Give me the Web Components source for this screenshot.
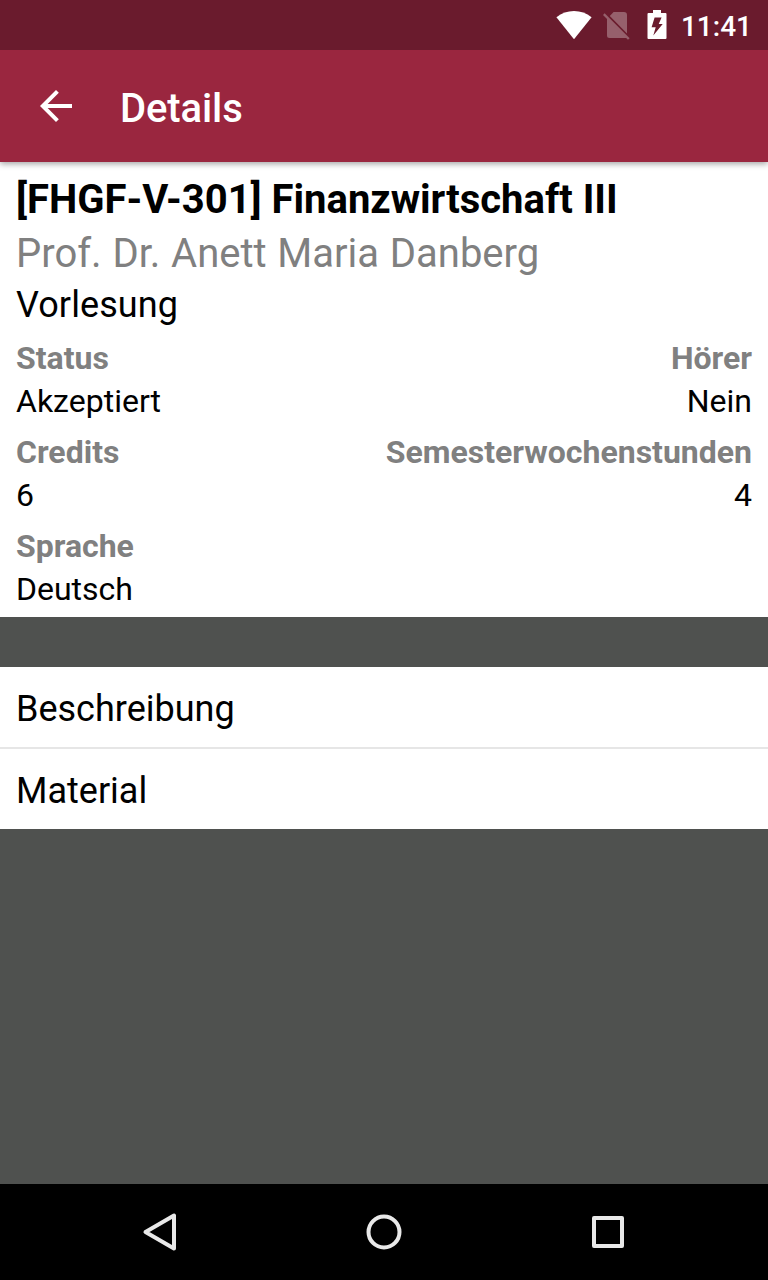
<!DOCTYPE html>
<html lang="de">
<head>
<meta charset="utf-8">
<meta name="viewport" content="width=device-width, initial-scale=1">
<title>Details</title>
<style>
  html, body { margin: 0; height: 100%; }
  body { font-family: Roboto, "Liberation Sans", sans-serif; color: #000; overflow: hidden; }
</style>
</head>
<body>
<course-screen></course-screen>

<script>
/** Base class: renders the static template of the subclass into an open root. */
class BaseElement extends HTMLElement {
  constructor() {
    super();
    const tpl = document.createElement('template');
    tpl.innerHTML = this.constructor.markup;
    this.attachShadow({ mode: 'open' }).append(tpl.content.cloneNode(true));
  }
}

class StatusBar extends BaseElement {
  static markup = `
    <style>
      :host { display: flex; align-items: center; justify-content: flex-end; height: 50px; flex: none;
        box-sizing: border-box; padding-right: 16px; background: #6a1b2d; color: #fff; z-index: 2; }
      svg { display: block; flex: none; }
      .sim { margin-left: 11px; }
      .battery { margin-left: 17px; }
      .time { margin-left: 14px; font: 500 28px/46px Roboto, sans-serif; padding-top: 4px; }
    </style>
    <svg width="36" height="30" viewBox="0 0 36 30" fill="#fff">
      <path d="M.4 7.2C5.600 3.200 11.500 1 18 1s12.400 2.200 17.600 6.200L18 29.300z"/>
    </svg>
    <svg class="sim" width="27" height="30" viewBox="0 0 27 30">
      <path fill="#96606c" d="M10.600 2H21q3 0 3 3v18.500L6.800 6zM4 7.500 24 27.400Q23.500 28 22 28H6.500Q4 28 4 25.500z"/>
      <path stroke="#96606c" stroke-width="2.400" d="M.8 4.200 25.800 29"/>
    </svg>
    <svg class="battery" width="20" height="30" viewBox="0 0 20 30">
      <path fill="#fff" d="M6 0h8v3h4.500q1 0 1 1v24q0 1-1 1h-17q-1 0-1-1V4q0-1 1-1H6z"/>
      <path fill="#6a1b2d" d="M7.600 7.600h7L11.700 14h4L6.300 25.500 8.700 17.200H4.600z"/>
    </svg>
    <span class="time"><slot></slot></span>
  `;
}

class AppBar extends BaseElement {
  static markup = `
    <style>
      :host { display: flex; align-items: center; height: 112px; flex: none; box-sizing: border-box;
        padding-left: 32px; background: #9a263f; color: #fff; z-index: 1;
        box-shadow: 0 2px 6px rgba(0, 0, 0, .36); }
      svg { display: block; flex: none; }
      h1 { margin: 6px 0 0 40px; font-size: 40px; line-height: 48px; font-weight: 500; letter-spacing: -.1px; }
    </style>
    <svg width="48" height="48" viewBox="0 0 24 24" fill="#fff">
      <path d="M20 11H7.830l5.590-5.590L12 4l-8 8 8 8 1.410-1.410L7.830 13H20z"/>
    </svg>
    <h1><slot></slot></h1>
  `;
}

class CourseHeader extends BaseElement {
  static markup = `
    <style>
      :host { display: block; height: 455px; box-sizing: border-box; padding: 11px 16px 0; background: #fff; }
      .title, .lecturer { font-size: 40px; line-height: 54px; white-space: nowrap; }
      .title { font-weight: 700; letter-spacing: -.01px; }
      .lecturer { color: #808080; word-spacing: .8px; }
      .type { font-size: 36px; line-height: 48px; letter-spacing: .1px; }
      .facts { display: grid; grid-template-columns: auto auto; justify-content: space-between;
        row-gap: 8px; margin-top: 8px; }
    </style>
    <div class="title"><slot name="title"></slot></div>
    <div class="lecturer"><slot name="lecturer"></slot></div>
    <div class="type"><slot name="type"></slot></div>
    <div class="facts"><slot></slot></div>
  `;
}

/** Label above value; the "end" attribute aligns both to the right. */
class CourseFact extends BaseElement {
  static markup = `
    <style>
      :host { display: block; font-size: 32px; line-height: 43px; }
      :host([end]) { text-align: right; }
      .label { font-weight: 700; color: #808080; }
    </style>
    <div class="label"></div>
    <div class="value"><slot></slot></div>
  `;

  connectedCallback() {
    this.shadowRoot.querySelector('.label').textContent = this.getAttribute('label') ?? '';
  }
}

class ListRow extends BaseElement {
  static markup = `
    <style>
      :host { display: block; height: 80px; padding: 0 16px; background: #fff;
        font-size: 36px; line-height: 84px; }
      :host(:not(:last-of-type)) { border-bottom: 2px solid #e6e6e6; }
    </style>
    <slot></slot>
  `;
}

class NavBar extends BaseElement {
  static markup = `
    <style>
      :host { display: flex; align-items: center; justify-content: center; gap: 176px;
        height: 96px; flex: none; background: #000; }
      svg { display: block; fill: none; stroke: #e9e9e9; stroke-width: 4; stroke-linejoin: round; }
    </style>
    <svg width="48" height="48" viewBox="0 0 48 48"><path d="M9.500 24 38 7.500v33z"/></svg>
    <svg width="48" height="48" viewBox="0 0 48 48"><circle cx="24" cy="24" r="15.500"/></svg>
    <svg width="48" height="48" viewBox="0 0 48 48"><path d="M10 10h28v28H10z"/></svg>
  `;
}

class CourseScreen extends BaseElement {
  static markup = `
    <style>
      :host { display: flex; flex-direction: column; height: 100vh; background: #4f514f; }
      main { flex: 1; min-height: 0; }
      nav { margin-top: 50px; }
    </style>
    <status-bar>11:41</status-bar>
    <app-bar>Details</app-bar>
    <main>
      <course-header>
        <span slot="title">[FHGF-V-301] Finanzwirtschaft III</span>
        <span slot="lecturer">Prof. Dr. Anett Maria Danberg</span>
        <span slot="type">Vorlesung</span>
        <course-fact label="Status">Akzeptiert</course-fact>
        <course-fact label="Hörer" end>Nein</course-fact>
        <course-fact label="Credits">6</course-fact>
        <course-fact label="Semesterwochenstunden" end>4</course-fact>
        <course-fact label="Sprache">Deutsch</course-fact>
      </course-header>
      <nav>
        <list-row>Beschreibung</list-row>
        <list-row>Material</list-row>
      </nav>
    </main>
    <nav-bar></nav-bar>
  `;
}

customElements.define('status-bar', StatusBar);
customElements.define('app-bar', AppBar);
customElements.define('course-header', CourseHeader);
customElements.define('course-fact', CourseFact);
customElements.define('list-row', ListRow);
customElements.define('nav-bar', NavBar);
customElements.define('course-screen', CourseScreen);
</script>
</body>
</html>
